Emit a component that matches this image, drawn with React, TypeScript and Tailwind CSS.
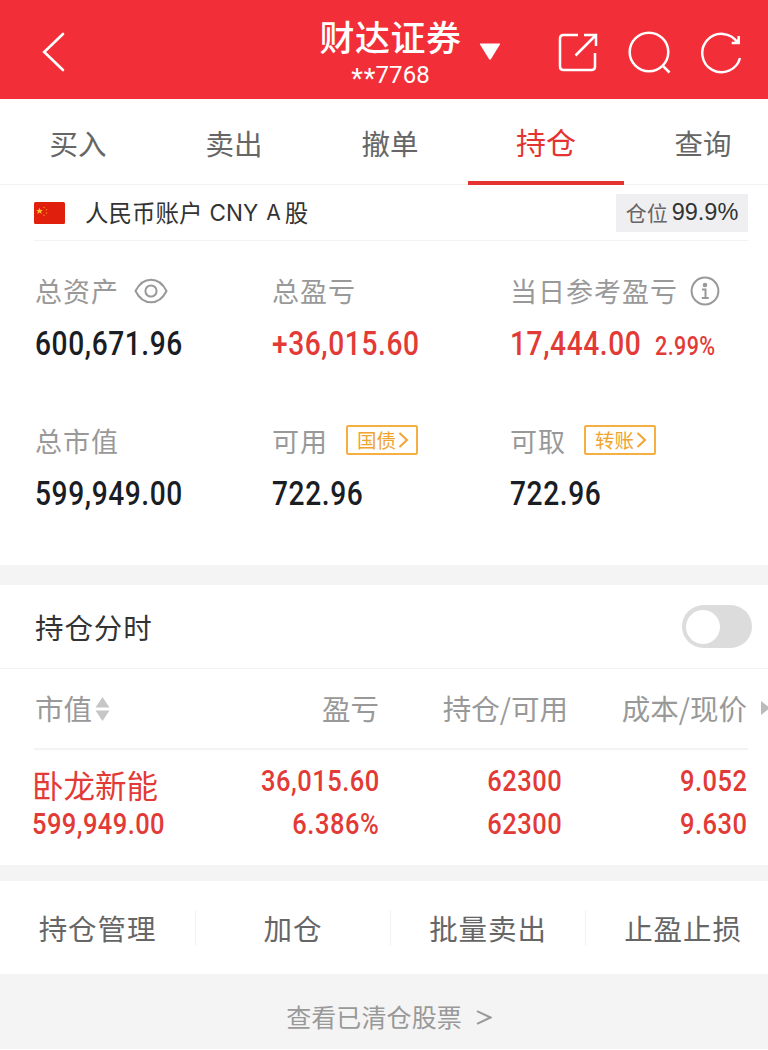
import type { ReactNode } from "react";

const tabs = ["买入", "卖出", "撤单", "持仓", "查询"];
const actions = ["持仓管理", "加仓", "批量卖出", "止盈止损"];

function Header() {
  return (
    <header className="flex h-[99px] items-center bg-[#f22f38] text-white">
      <svg className="ml-[41px] mt-1 h-10 w-6" viewBox="0 0 24 40" fill="none" stroke="currentColor" strokeWidth="2.6">
        <path d="M22 2 3.200 20 22 38" strokeLinecap="round" strokeLinejoin="miter" />
      </svg>
      <div className="ml-[253px] w-[145px] text-center">
        <div className="h-[54px] whitespace-nowrap pt-[7px] text-[35px] font-medium leading-[48px] tracking-[0.5px]">财达证券</div>
        <div className="flex h-[36px] items-start justify-center pt-[3px] font-['Roboto'] text-[24px] leading-[26px]">
          <span className="pt-[4px] text-[27px] tracking-[1px]">**</span>
          <span className="-ml-px tracking-[0.1px]">7768</span>
        </div>
      </div>
      <svg className="ml-[14px] mt-[4px] h-[20px] w-[26px]" viewBox="0 0 26 20" fill="currentColor">
        <path d="M3.500 1.500h19q1 0 .4 1L14 17q-1 1.500-2 0L3 2.500q-.6-1 .5-1z" />
      </svg>
      <svg className="ml-[55px] mt-[6px] h-[40px] w-[40px]" viewBox="0 0 40 40" fill="none" stroke="currentColor" strokeWidth="2.500">
        <path d="M20 2H5.500Q2 2 2 5.500v28Q2 37 5.500 37h28q3.500 0 3.500-3.500V20M17.500 22.500 37 3M26 2h12v11" />
      </svg>
      <svg className="ml-[30px] mt-[6px] h-[44px] w-[44px]" viewBox="0 0 44 44" fill="none" stroke="currentColor" strokeWidth="2.500">
        <circle cx="21" cy="21" r="19.300" />
        <path d="m34.500 34.500 7 7" />
      </svg>
      <svg className="ml-[28px] mt-[6px] h-[44px] w-[44px]" viewBox="0 0 44 44" fill="none" stroke="currentColor" strokeWidth="2.500">
        <path d="M40 27A19.200 19.200 0 1 1 37.500 11.500M38.700 5v7h-7" />
        <path d="M38.700 7v5h-5z" fill="currentColor" stroke="none" />
      </svg>
    </header>
  );
}

function Num({ children, className = "" }: { children: ReactNode; className?: string }) {
  return (
    <span className={`inline-block whitespace-nowrap font-['Roboto'] font-medium ${className}`}>{children}</span>
  );
}

function Stat({ label, extra, children }: { label: string; extra?: ReactNode; children: ReactNode }) {
  return (
    <div className="h-[150px]">
      <div className="flex h-[40px] items-center whitespace-nowrap text-[27px] tracking-[1px] text-[#999]">
        {label}
        {extra}
      </div>
      <div className="flex h-[64px] items-center whitespace-nowrap pt-[2px] text-[#1a1d24]">{children}</div>
    </div>
  );
}

const big = "origin-left scale-x-[0.84] tracking-[0.7px] text-[33.500px]";
const cell = "origin-right scale-x-[0.85] tracking-[0.6px] text-[30px]";

function Tag({ children }: { children: ReactNode }) {
  return (
    <span className="mb-[3px] ml-[18px] flex h-[30px] w-[72px] items-center rounded-[2px] border-2 border-[#f5b041] pl-[9px] text-[19.500px] leading-none tracking-normal text-[#f0a42e]">
      {children}
      <svg className="ml-[2px] h-4 w-[11px]" viewBox="0 0 11 16" fill="none" stroke="currentColor" strokeWidth="2">
        <path d="m1.500 1 7.500 7-7.500 7" />
      </svg>
    </span>
  );
}

function Flag() {
  return (
    <svg className="h-[22px] w-[31px]" viewBox="0 0 31 22">
      <rect width="31" height="22" rx="1.500" fill="#e0200c" />
      <path d="m5.500 5.700 1 2.300h2.400L7 9.600l.7 2.400-2.200-1.400L3.300 12 4 9.600 2.100 8h2.400z" fill="#fbc02d" />
      <g fill="#f58220">
        <circle cx="10" cy="5.500" r=".8" />
        <circle cx="12.500" cy="7.800" r=".8" />
        <circle cx="12.500" cy="11" r=".8" />
        <circle cx="10" cy="13.300" r=".8" />
      </g>
    </svg>
  );
}

export default function App() {
  return (
    <div className="h-[1050px] w-[768px] overflow-hidden bg-white font-['Noto_Sans_CJK_SC',sans-serif]">
      <Header />
      <nav className="mt-px flex h-[85px] border-b border-[#f2f2f2] text-[28.500px]">
        {tabs.map((t) => (
          <div
            key={t}
            className={
              t === "持仓"
                ? "mr-px flex h-[85px] w-[156px] shrink-0 items-center justify-center border-b-4 border-[#e43432] pt-[2px] text-[30px] text-[#e43432]"
                : "flex h-[85px] w-[156px] shrink-0 items-center justify-center pt-[1px] text-[#666]"
            }
          >
            {t}
          </div>
        ))}
      </nav>
      <section className="ml-[34px] mr-[20px] flex h-[56px] items-center border-b border-[#f3f3f3]">
        <Flag />
        <div className="ml-[20px] flex items-center whitespace-nowrap text-[23.500px] text-[#333]">
          人民币账户
          <span className="ml-[7px] font-['Inter'] text-[22.500px]">CNY</span>
          <span className="ml-[8px] mr-[4px] font-['Inter'] text-[21px]">A</span>股
        </div>
        <div className="ml-auto flex h-[38px] w-[132px] items-center justify-center whitespace-nowrap bg-[#efeff2] text-[21px] text-[#666]">
          仓位<span className="ml-[4px] font-['Liberation_Sans'] text-[23.500px] text-[#333]">99.9%</span>
        </div>
      </section>

      <section className="grid h-[324px] grid-cols-[237px_238px_1fr] content-start pl-[35px] pt-[30px]">
        <Stat
          label="总资产"
          extra={
            <svg className="ml-[15px] h-[26px] w-[34px]" viewBox="0 0 34 26" fill="none" stroke="currentColor" strokeWidth="2">
              <path d="M1.500 13C9-2 25-2 32.500 13 25 28 9 28 1.500 13z" />
              <circle cx="17" cy="13" r="5.600" />
            </svg>
          }
        >
          <Num className={big}>600,671.96</Num>
        </Stat>
        <Stat label="总盈亏">
          <Num className={`${big} text-[#e23a36]`}>+36,015.60</Num>
        </Stat>
        <Stat
          label="当日参考盈亏"
          extra={
            <svg className="ml-[12px] h-[30px] w-[30px]" viewBox="0 0 30 30" fill="none" stroke="currentColor" strokeWidth="2">
              <circle cx="15" cy="15" r="13.400" />
              <circle cx="15" cy="9" r="2.300" fill="currentColor" stroke="none" />
              <path d="M12 13.500h3.500V22M11.800 22h7" />
            </svg>
          }
        >
          <span className="flex items-baseline text-[#e23a36]">
            <Num className={big}>17,444.00</Num>
            <Num className="-ml-[11px] origin-left scale-x-[0.86] tracking-[0.5px] text-[25px]">2.99%</Num>
          </span>
        </Stat>
        <Stat label="总市值">
          <Num className={big}>599,949.00</Num>
        </Stat>
        <Stat label="可用" extra={<Tag>国债</Tag>}>
          <Num className={big}>722.96</Num>
        </Stat>
        <Stat label="可取" extra={<Tag>转账</Tag>}>
          <Num className={big}>722.96</Num>
        </Stat>
      </section>
      <div className="h-[20px] bg-[#f4f4f4]" />

      <section className="flex h-[84px] items-center justify-between border-b border-[#f2f2f2] pl-[35px] pr-[16px]">
        <span className="pt-[2px] text-[28.500px] tracking-[0.9px] text-[#333]">持仓分时</span>
        <div className="flex h-[43px] w-[70px] items-center rounded-full bg-[#dcdcdc] pl-[4px]">
          <div className="size-[34px] rounded-full bg-white" />
        </div>
      </section>

      <div className="flex h-[79px] items-center whitespace-nowrap text-[28.500px] text-[#999]">
        <div className="flex w-[200px] items-center pl-[35px]">
          市值
          <svg className="ml-[3px] h-[24px] w-[15px]" viewBox="0 0 15 24" fill="#c6c6c6">
            <path d="m7.500 0 7 10.500H.5zM.5 13.500h14L7.500 24z" />
          </svg>
        </div>
        <div className="w-[179px] text-right">盈亏</div>
        <div className="w-[189px] text-right">持仓/可用</div>
        <div className="w-[179px] text-right">成本/现价</div>
        <svg className="-mt-[2px] ml-[14px] h-[14px] w-[7px] shrink-0" viewBox="0 0 7 14" fill="#bbb">
          <path d="M0 0 9 7 0 14z" />
        </svg>
      </div>
      <section className="ml-[34px] mr-[20px] flex h-[117px] border-t-2 border-[#f3f3f3] pt-[9px] text-[29px] leading-[43px] text-[#e23a36]">
        <div className="-ml-[2px] flex w-[167px] flex-col items-start">
          <span className="whitespace-nowrap pt-[4px] text-[31.500px] leading-[43px]">卧龙新能</span>
          <Num className="-mt-[4px] origin-left scale-x-[0.85] text-[30px] leading-[43px] tracking-[0.5px]">599,949.00</Num>
        </div>
        <div className="flex w-[181px] flex-col items-end">
          <Num className={cell}>36,015.60</Num>
          <Num className={cell}>6.386%</Num>
        </div>
        <div className="flex w-[183px] flex-col items-end">
          <Num className={cell}>62300</Num>
          <Num className={cell}>62300</Num>
        </div>
        <div className="flex w-[186px] flex-col items-end">
          <Num className={cell}>9.052</Num>
          <Num className={cell}>9.630</Num>
        </div>
      </section>
      <div className="h-[16px] bg-[#f4f4f4]" />

      <section className="flex h-[93px] items-center text-[28.500px] tracking-[0.9px] text-[#666]">
        {actions.map((a, i) => (
          <div
            key={a}
            className={
              i === 0
                ? "flex h-[36px] w-[195px] shrink-0 items-center justify-center pt-[2px]"
                : "flex h-[36px] w-[195px] shrink-0 items-center justify-center border-l border-[#f3f3f3] pt-[2px]"
            }
          >
            {a}
          </div>
        ))}
      </section>
      <footer className="flex h-[75px] items-center justify-center bg-[#f4f4f4] pl-[10px] pt-[11px] text-[25px] tracking-[0.1px] text-[#999]">
        查看已清仓股票
        <svg className="ml-[14px] h-[15px] w-[16px]" viewBox="0 0 16 15" fill="none" stroke="currentColor" strokeWidth="2">
          <path d="M1 1.200 14.500 7.500 1 13.800" />
        </svg>
      </footer>
    </div>
  );
}
